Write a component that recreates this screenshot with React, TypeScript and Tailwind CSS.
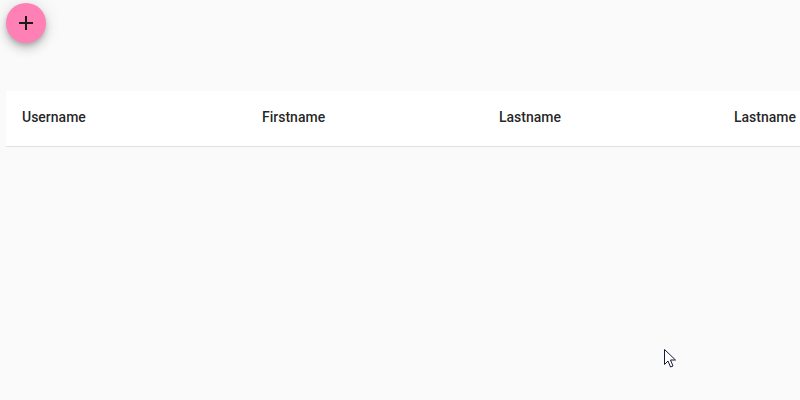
export default function App() {
  const cols = [
    { label: "Username", w: "w-[256px] pl-4" },
    { label: "Firstname", w: "w-[237px]" },
    { label: "Lastname", w: "w-[235px]" },
    { label: "Lastname", w: "w-[235px]" },
  ];
  return (
    <div className="relative h-[400px] w-[800px] overflow-hidden bg-[#fafafa] font-['Roboto',_sans-serif]">
      <div className="pl-[6px] pt-[3px]">
        <button className="flex h-10 w-10 items-center justify-center rounded-full bg-[#ff80b5] shadow-[0_3px_5px_-1px_rgba(0,0,0,0.2),0_6px_10px_0_rgba(0,0,0,0.14),0_1px_18px_0_rgba(0,0,0,0.12)]">
          <svg width="14" height="14" viewBox="0 0 14 14">
            <path d="M7 0v14M0 7h14" stroke="#1a1a1a" strokeWidth="2" />
          </svg>
        </button>
      </div>
      <div className="ml-[6px] mt-12 w-[960px] bg-white">
        <div className="flex h-14 items-center border-b border-[#e0e0e0] pb-[2px]">
          {cols.map((c, i) => (
            <div
              key={i}
              className={`${c.w} shrink-0 text-[14px] font-medium text-[rgba(0,0,0,0.87)]`}
            >
              {c.label}
            </div>
          ))}
        </div>
      </div>
      <svg
        className="absolute left-[664px] top-[349px]"
        width="13"
        height="20"
        viewBox="0 0 13 20"
      >
        <path
          d="M0.5 0.5v15l3.5-3.5 2.5 6 2.5-1-2.5-6h5z"
          fill="#fff"
          stroke="#1a1a3a"
          strokeWidth="1"
        />
      </svg>
    </div>
  );
}
